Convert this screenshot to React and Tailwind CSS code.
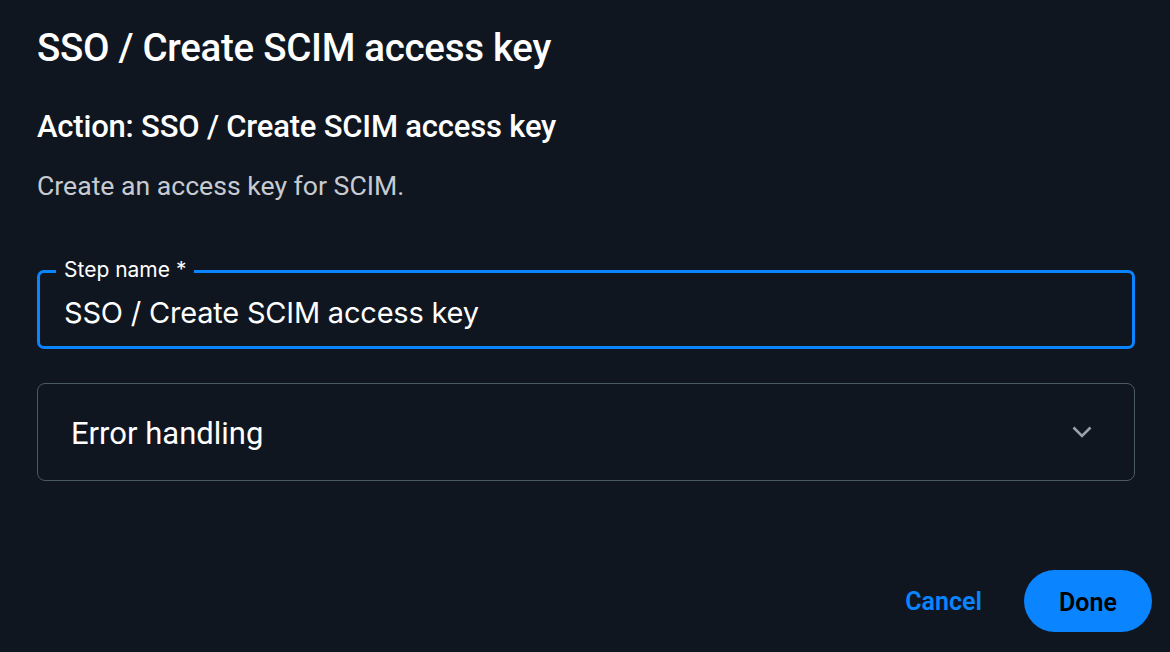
export default function App() {
  return (
    <div
      className="w-[1170px] h-[652px] bg-[#0f1620] flex flex-col overflow-hidden"
      style={{ fontFamily: "Roboto, 'Noto Sans', sans-serif" }}
    >
      <div className="flex flex-col pl-[37px] pr-[35px]">
        <h1 className="mt-[25px] text-[38.5px] leading-[46px] font-medium text-white tracking-[-0.3px]">
          SSO / Create SCIM access key
        </h1>
        <h2 className="mt-[38px] text-[31px] leading-[36px] font-medium text-white tracking-[-0.2px]">
          Action: SSO / Create SCIM access key
        </h2>
        <p className="mt-[25px] text-[26.6px] leading-[32px] text-[#c7cbd1]">
          Create an access key for SCIM.
        </p>

        <div className="relative mt-[68px] h-[79px] rounded-[7px] border-[3px] border-[#0a84ff] flex items-center pl-[24px]">
          <span
            className="absolute left-[16px] -top-[16px] px-[8px] bg-[#0f1620] text-[21px] leading-[26px] text-white"
            style={{ fontFamily: "Inter, sans-serif" }}
          >
            Step name *
          </span>
          <span
            className="mt-[6px] text-[29px] leading-[36px] text-white tracking-[-0.2px]"
            style={{ fontFamily: "Inter, sans-serif" }}
          >
            SSO / Create SCIM access key
          </span>
        </div>

        <div className="mt-[34px] h-[98px] rounded-[8px] border border-[#4b5963] flex items-center justify-between pl-[33px] pr-[42px]">
          <span className="mt-[3px] text-[31px] leading-[36px] text-white">Error handling</span>
          <svg width="20" height="12" viewBox="0 0 20 12" fill="none">
            <path d="M1.5 1.5 L10 10 L18.5 1.5" stroke="#9aa1a8" strokeWidth="2.6" />
          </svg>
        </div>
      </div>

      <div className="mt-auto mb-[20px] mr-[18px] flex items-center justify-end gap-[42px]">
        <button className="mt-[2px] text-[25px] font-semibold text-[#0a84ff] leading-[30px]">Cancel</button>
        <button className="w-[128px] h-[62px] rounded-full bg-[#0a84ff] text-[25px] font-semibold text-black">
          <span className="relative top-[2px]">Done</span>
        </button>
      </div>
    </div>
  );
}
